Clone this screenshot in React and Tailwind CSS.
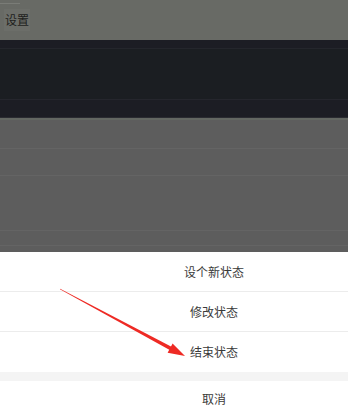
const font = { fontFamily: '"Noto Sans CJK SC", "Noto Sans", sans-serif' };

function SheetRow({ label, divider }) {
  return (
    <div
      className={`h-[40px] flex items-center justify-center pl-[80px] text-[12px] text-[#3a3a3a] ${
        divider ? "border-b border-[#ececec]" : ""
      }`}
    >
      {label}
    </div>
  );
}

export default function App() {
  return (
    <div
      className="relative w-[348px] h-[417px] overflow-hidden bg-white"
      style={font}
    >
      {/* dimmed page behind the sheet */}
      <div className="h-[40px] bg-[#686a65] relative">
        <div className="absolute left-0 top-[3px] w-[20px] h-px bg-[#7a7c77]" />
        <div className="h-full flex items-center pl-[4px]">
          <span className="text-[12px] text-[#1e1f1d] bg-[#6c6e69] px-[1px] py-[2px]">
            设置
          </span>
        </div>
      </div>
      <div className="h-[78px] bg-[#1c1d24] flex flex-col">
        <div className="h-[9px] border-b border-[#24262c]" />
        <div className="h-[51px] bg-[#1b1e22] border-b border-[#25262d]" />
        <div className="flex-1 border-b border-[#2a2b31]" />
      </div>
      <div className="h-[134px] bg-[#5d5d5d] flex flex-col border-t-[2px] border-[#636762]">
        <div className="h-[29px] border-b border-[#646464]" />
        <div className="h-[27px] border-b border-[#646464]" />
        <div className="h-[55px] border-b border-[#646464]" />
        <div className="h-[15px] border-b border-[#646464]" />
        <div className="flex-1" />
      </div>

      {/* bottom action sheet */}
      <div className="flex flex-col bg-white">
        <SheetRow label="设个新状态" divider />
        <SheetRow label="修改状态" divider />
        <SheetRow label="结束状态" />
        <div className="h-[9px] bg-[#f4f4f4]" />
        <div className="h-[35px] flex items-center justify-center pl-[80px] text-[12px] text-[#3a3a3a]">
          取消
        </div>
      </div>

      {/* red annotation arrow */}
      <svg
        className="absolute left-0 top-0"
        width="348"
        height="417"
        viewBox="0 0 348 417"
      >
        <polygon
          points="60.1,288.7 59.9,289.3 171.1,350.8 172.9,347.4"
          fill="#ee2a24"
        />
        <polygon points="185,356 167.6,352.8 172.6,343.4" fill="#ee2a24" />
      </svg>
    </div>
  );
}
